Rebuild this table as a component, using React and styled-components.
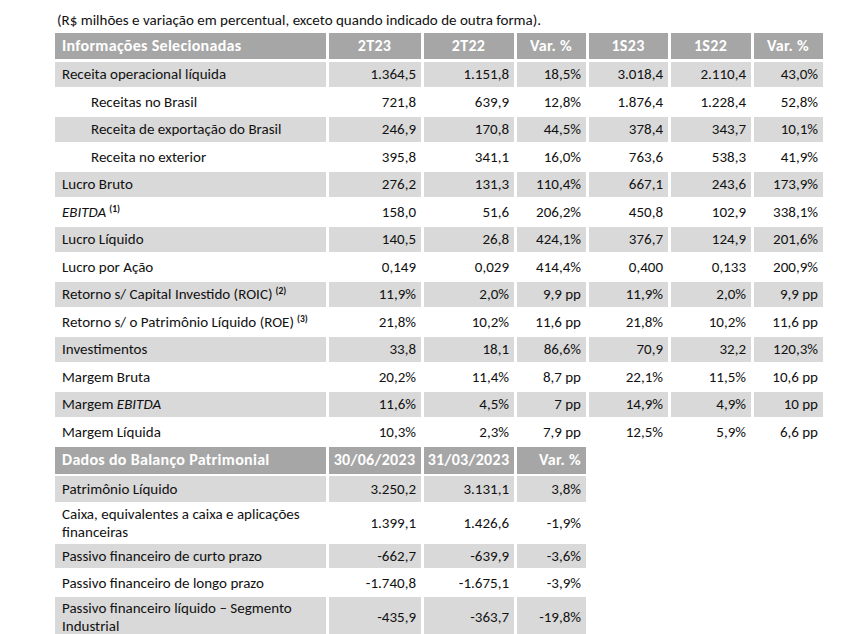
import React from 'react';
import styled, { createGlobalStyle } from 'styled-components';

const GlobalStyle = createGlobalStyle`
  html, body {
    margin: 0;
    padding: 0;
    background: #ffffff;
  }
  body {
    font-family: Carlito, Lato, "Liberation Sans", sans-serif;
    color: #111111;
  }
`;

const Page = styled.div`
  padding: 11px 0 0 55px;
  width: 801px;
`;

const Caption = styled.p`
  margin: 0 0 4px 2px;
  font-size: 15px;
  line-height: 18px;
  color: #111111;
`;

const Table = styled.div`
  display: flex;
  flex-direction: column;
  gap: 2.5px;
  margin-bottom: 2.5px;
`;

const Row = styled.div`
  display: grid;
  grid-template-columns: ${p => p.$cols};
  column-gap: 3px;
  height: ${p => p.$height || 25}px;
`;

const Cell = styled.div`
  display: flex;
  align-items: center;
  justify-content: ${p => (p.$align === 'left' ? 'flex-start' : p.$align === 'center' ? 'center' : 'flex-end')};
  padding: ${p => (p.$align === 'left' ? `0 6px 0 ${7 + (p.$indent ? 29 : 0)}px` : '0 5px 0 4px')};
  background: ${p => (p.$head ? '#a6a6a6' : p.$shade ? '#d9d9d9' : 'transparent')};
  color: ${p => (p.$head ? '#ffffff' : '#111111')};
  font-weight: ${p => (p.$head ? 700 : 400)};
  font-size: ${p => (p.$head ? 16 : 15)}px;
  letter-spacing: ${p => (p.$head ? '0.3px' : 'normal')};
  line-height: 18px;
  white-space: nowrap;
`;

const Label = styled.span`
  white-space: nowrap;
`;

const Sup = styled.sup`
  font-size: 9.5px;
  font-weight: 700;
  margin-left: 3px;
  vertical-align: 5px;
  line-height: 0;
`;

const TOP_COLS = '271px 92px 90px 69px 79px 80px 69px';
const BOTTOM_COLS = '271px 92px 90px 69px';

const topHead = ['2T23', '2T22', 'Var. %', '1S23', '1S22', 'Var. %'];

const topRows = [
  { label: 'Receita operacional líquida', v: ['1.364,5', '1.151,8', '18,5%', '3.018,4', '2.110,4', '43,0%'] },
  { label: 'Receitas no Brasil', indent: true, v: ['721,8', '639,9', '12,8%', '1.876,4', '1.228,4', '52,8%'] },
  { label: 'Receita de exportação do Brasil', indent: true, v: ['246,9', '170,8', '44,5%', '378,4', '343,7', '10,1%'] },
  { label: 'Receita no exterior', indent: true, v: ['395,8', '341,1', '16,0%', '763,6', '538,3', '41,9%'] },
  { label: 'Lucro Bruto', v: ['276,2', '131,3', '110,4%', '667,1', '243,6', '173,9%'] },
  { label: <><i>EBITDA</i><Sup>(1)</Sup></>, v: ['158,0', '51,6', '206,2%', '450,8', '102,9', '338,1%'] },
  { label: 'Lucro Líquido', v: ['140,5', '26,8', '424,1%', '376,7', '124,9', '201,6%'] },
  { label: 'Lucro por Ação', v: ['0,149', '0,029', '414,4%', '0,400', '0,133', '200,9%'] },
  { label: <>Retorno s/ Capital Investido (ROIC)<Sup>(2)</Sup></>, v: ['11,9%', '2,0%', '9,9 pp', '11,9%', '2,0%', '9,9 pp'] },
  { label: <>Retorno s/ o Patrimônio Líquido (ROE)<Sup>(3)</Sup></>, v: ['21,8%', '10,2%', '11,6 pp', '21,8%', '10,2%', '11,6 pp'] },
  { label: 'Investimentos', v: ['33,8', '18,1', '86,6%', '70,9', '32,2', '120,3%'] },
  { label: 'Margem Bruta', v: ['20,2%', '11,4%', '8,7 pp', '22,1%', '11,5%', '10,6 pp'] },
  { label: <>Margem <i>EBITDA</i></>, v: ['11,6%', '4,5%', '7 pp', '14,9%', '4,9%', '10 pp'] },
  { label: 'Margem Líquida', v: ['10,3%', '2,3%', '7,9 pp', '12,5%', '5,9%', '6,6 pp'] },
];

const bottomRows = [
  { label: 'Patrimônio Líquido', h: 26, v: ['3.250,2', '3.131,1', '3,8%'] },
  { label: <>Caixa, equivalentes a caixa e aplicações<br />financeiras</>, h: 37, v: ['1.399,1', '1.426,6', '-1,9%'] },
  { label: 'Passivo financeiro de curto prazo', h: 24, v: ['-662,7', '-639,9', '-3,6%'] },
  { label: 'Passivo financeiro de longo prazo', h: 24, v: ['-1.740,8', '-1.675,1', '-3,9%'] },
  { label: <>Passivo financeiro líquido – Segmento<br />Industrial</>, h: 40, v: ['-435,9', '-363,7', '-19,8%'] },
];

export default function App() {
  return (
    <Page>
      <GlobalStyle />
      <Caption>(R$ milhões e variação em percentual, exceto quando indicado de outra forma).</Caption>

      <Table>
        <Row $cols={TOP_COLS} $height={26}>
          <Cell $head $align="left">Informações Selecionadas</Cell>
          {topHead.map((h, i) => (
            <Cell key={i} $head $align="center">{h}</Cell>
          ))}
        </Row>
        {topRows.map((r, i) => (
          <Row key={i} $cols={TOP_COLS} $height={25}>
            <Cell $align="left" $indent={r.indent} $shade={i % 2 === 0}>
              <Label>{r.label}</Label>
            </Cell>
            {r.v.map((v, j) => (
              <Cell key={j} $shade={i % 2 === 0}>{v}</Cell>
            ))}
          </Row>
        ))}
      </Table>

      <Table>
        <Row $cols={BOTTOM_COLS} $height={27}>
          <Cell $head $align="left">Dados do Balanço Patrimonial</Cell>
          <Cell $head $align="center">30/06/2023</Cell>
          <Cell $head $align="center">31/03/2023</Cell>
          <Cell $head>Var. %</Cell>
        </Row>
        {bottomRows.map((r, i) => (
          <Row key={i} $cols={BOTTOM_COLS} $height={r.h}>
            <Cell $align="left" $shade={i % 2 === 0}>
              <Label>{r.label}</Label>
            </Cell>
            {r.v.map((v, j) => (
              <Cell key={j} $shade={i % 2 === 0}>{v}</Cell>
            ))}
          </Row>
        ))}
      </Table>
    </Page>
  );
}
